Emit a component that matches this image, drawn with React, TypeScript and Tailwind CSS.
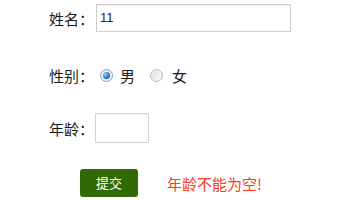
import React from "react";

function Radio({ checked }: { checked: boolean }) {
  return (
    <span
      className={
        "inline-flex items-center justify-center w-[13px] h-[13px] rounded-full border " +
        (checked ? "border-[#7aa4c9] bg-[#eef4fa]" : "border-[#b8b8b8] bg-[#f0f0f0]")
      }
    >
      {checked ? (
        <span className="w-[7px] h-[7px] rounded-full bg-[radial-gradient(circle_at_35%_35%,#8fd0ff,#1f6fc0_60%,#0b3f80)]" />
      ) : (
        <span className="w-[9px] h-[9px] rounded-full bg-[linear-gradient(135deg,#e2e2e2,#fafafa)]" />
      )}
    </span>
  );
}

export default function App() {
  const cjk = "font-['Microsoft_YaHei','Noto_Sans_CJK_SC',sans-serif]";
  return (
    <div className={"w-[360px] h-[200px] bg-white overflow-hidden text-[#1a1a1a] " + cjk}>
      <div className="flex flex-col pl-[49px]">
        <div className="flex items-center mt-[4px] h-[28px]">
          <span className="text-[15px] w-[47px] leading-none">姓名：</span>
          <div className="w-[195px] h-[28px] border border-[#cfcfcf] shadow-[inset_0_1px_1px_rgba(0,0,0,0.06)] flex items-center pl-[3px] font-['Liberation_Sans',sans-serif] text-[13px] text-[#2a1a3a]">
            11
          </div>
        </div>
        <div className="flex items-center mt-[33px] h-[20px]">
          <span className="text-[15px] w-[51px] leading-none">性别：</span>
          <Radio checked />
          <span className="text-[15px] leading-none ml-[7px]">男</span>
          <span className="ml-[15px] flex"><Radio checked={false} /></span>
          <span className="text-[15px] leading-none ml-[9px]">女</span>
        </div>
        <div className="flex items-center mt-[28px] h-[30px]">
          <span className="text-[15px] w-[46px] leading-none">年龄：</span>
          <div className="w-[54px] h-[30px] border border-[#d2d2d2] shadow-[inset_0_1px_1px_rgba(0,0,0,0.05)]" />
        </div>
        <div className="flex items-center mt-[26px] h-[28px] pl-[31px]">
          <div className="w-[58px] h-[28px] rounded-[3px] bg-[#2f6a04] text-white text-[13px] flex items-center justify-center">
            提交
          </div>
          <span className="ml-[29px] text-[15px] text-[#ff3a1a] leading-none">年龄不能为空!</span>
        </div>
      </div>
    </div>
  );
}
